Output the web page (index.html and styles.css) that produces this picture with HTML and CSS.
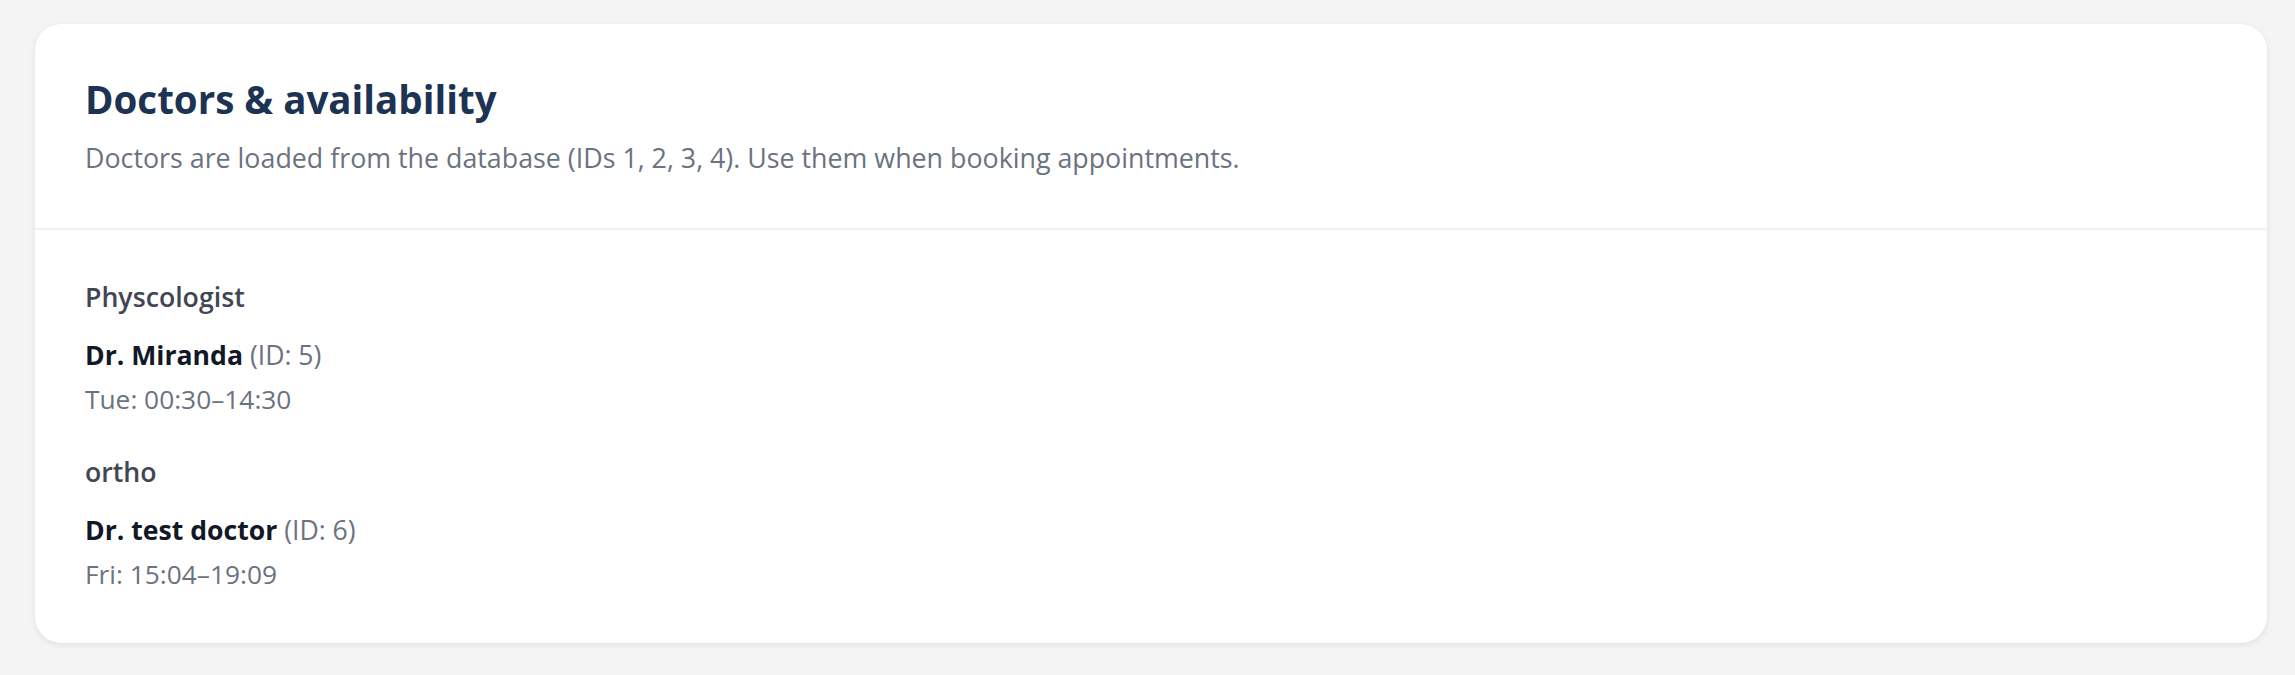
FILE: index.html
```html
<!DOCTYPE html>
<html lang="en">
<head>
<meta charset="utf-8">
<title>Doctors &amp; availability</title>
<link rel="stylesheet" href="styles.css">
</head>
<body>
<main class="page">
  <section class="card">
    <header class="card-head">
      <h2 class="card-title">Doctors &amp; availability</h2>
      <p class="card-sub">Doctors are loaded from the database (IDs 1, 2, 3, 4). Use them when booking appointments.</p>
    </header>
    <div class="card-body">
      <div class="group">
        <h3 class="spec">Physcologist</h3>
        <div class="doctor">
          <div class="doc-name"><strong>Dr. Miranda</strong> <span class="doc-id">(ID: 5)</span></div>
          <div class="doc-hours">Tue: 00:30–14:30</div>
        </div>
      </div>
      <div class="group">
        <h3 class="spec">ortho</h3>
        <div class="doctor">
          <div class="doc-name"><strong>Dr. test doctor</strong> <span class="doc-id">(ID: 6)</span></div>
          <div class="doc-hours">Fri: 15:04–19:09</div>
        </div>
      </div>
    </div>
  </section>
</main>
</body>
</html>
```

FILE: styles.css
```css
* { box-sizing: border-box; }
html, body { margin: 0; padding: 0; }
body {
  background: #f4f4f4;
  font-family: "Open Sans", "Noto Sans", "Liberation Sans", sans-serif;
  color: #111827;
}
.page {
  padding: 24px 28px 32px 35px;
}
.card {
  background: #ffffff;
  border-radius: 26px;
  box-shadow: 0 2px 6px rgba(0, 0, 0, 0.08), 0 0 1px rgba(0, 0, 0, 0.06);
}
.card-head {
  padding: 53px 50px 52px;
  border-bottom: 2px solid #f1f1f1;
}
.card-title {
  margin: 0;
  font-size: 38.5px;
  line-height: 44px;
  font-weight: 700;
  color: #1d3354;
}
.card-sub {
  margin: 19px 0 0;
  font-size: 26.8px;
  line-height: 36px;
  color: #6b7280;
}
.card-body {
  padding: 49px 50px 51px;
  display: flex;
  flex-direction: column;
  gap: 37px;
}
.group {
  display: flex;
  flex-direction: column;
  gap: 22px;
}
.spec {
  margin: 0;
  font-size: 26.7px;
  line-height: 36px;
  font-weight: 600;
  color: #3f4654;
}
.doctor {
  display: flex;
  flex-direction: column;
  gap: 8px;
}
.doc-name {
  font-size: 26.6px;
  line-height: 36px;
  color: #111827;
}
.doc-name strong { font-weight: 700; }
.doc-id { color: #6b7280; }
.doc-hours {
  font-size: 26.3px;
  line-height: 36px;
  color: #6b7280;
}
```
